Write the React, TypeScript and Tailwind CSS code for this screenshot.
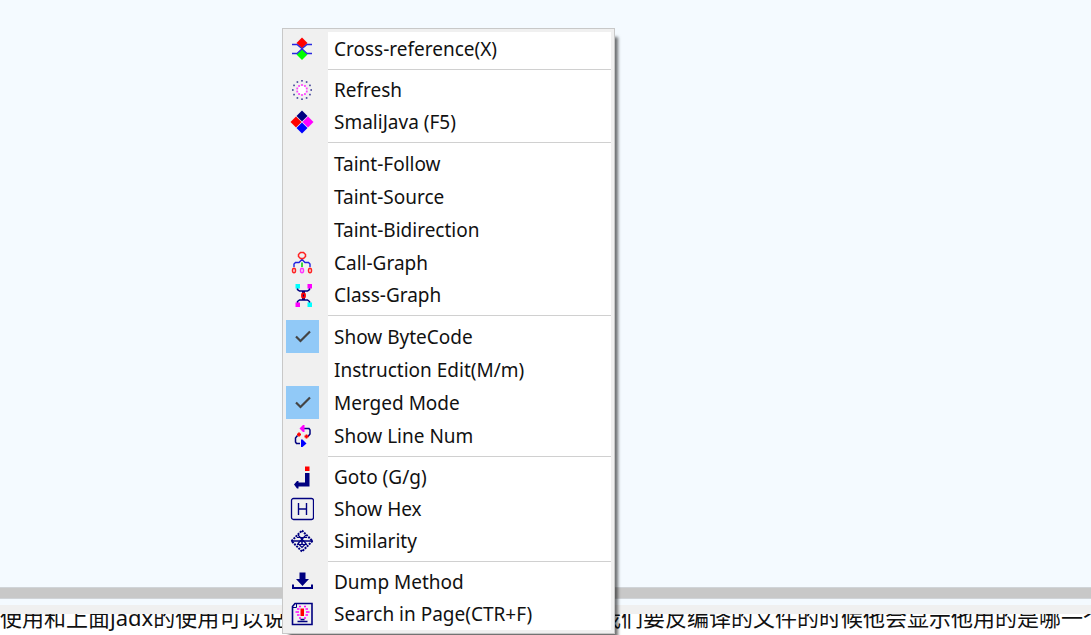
import type { ReactNode } from "react";

type Item = { label: string; icon?: ReactNode; checked?: boolean; tall?: boolean };

const svg = (children: ReactNode) => (
  <svg viewBox="0 0 24 24" className="size-6" fill="none" aria-hidden="true">
    {children}
  </svg>
);

const NAVY = "#000080";

const dots = (n: number, r: number, size: number, color: string, cx = 12, cy = 12) =>
  Array.from({ length: n }, (_, i) => {
    const a = (i * 2 * Math.PI) / n;
    return (
      <rect key={`${color}${i}`} x={cx + r * Math.sin(a) - size / 2} y={cy - r * Math.cos(a) - size / 2} width={size} height={size} fill={color} />
    );
  });

const icons = {
  xref: svg(
    <>
      <path d="M12 .5l5.500 5.500L12 11.500 6.500 6z" fill="#f00" />
      <path d="M12 12l5.500 5.500L12 23 6.500 17.500z" fill="#0f0" />
      <path d="M2 7.500h5l5 4.200 5-4.200h5M2 16.500h5l5-4.700 5 4.700h5" stroke="#2828e0" strokeWidth="1.300" />
    </>,
  ),
  refresh: svg(
    <>
      <circle cx="12" cy="12" r="4" fill="#fff" />
      {dots(12, 9.2, 1.6, "#3c3c96")}
      {dots(10, 5, 1.8, "#f4f")}
    </>,
  ),
  smali: svg(
    <>
      <path d="M12 .5l5.500 5.500L12 11.500 6.500 6z" fill={NAVY} />
      <path d="M6 6.500l5.500 5.500L6 17.500.5 12z" fill="#f00" />
      <path d="M18 6.500l5.500 5.500-5.500 5.500-5.500-5.500z" fill="#f0f" />
      <path d="M12 12.500l5.500 5.500L12 23.500 6.500 18z" fill="#00f" />
    </>,
  ),
  call: svg(
    <>
      <path d="M12 8.500L9 11.500H5.500L4 13v3M12 8.500l3 3h3.500L20 13v3" stroke="#2020e0" strokeWidth="1.400" />
      <path d="M12 11.500v4.500" stroke="#0c0" strokeWidth="1.500" />
      <path d="M10.500 1.500h3l2 2v2l-2 2h-3l-2-2v-2z" stroke="#f22" strokeWidth="1.500" />
      <ellipse cx="4" cy="19.500" rx="1.500" ry="2.300" stroke="#f22" strokeWidth="1.500" />
      <ellipse cx="12" cy="19.500" rx="1.500" ry="2.300" stroke="#f3f" strokeWidth="1.500" />
      <ellipse cx="20" cy="19.500" rx="1.500" ry="2.300" stroke="#f22" strokeWidth="1.500" />
    </>,
  ),
  klass: svg(
    <>
      <path d="M7.500 4.500v2l2 1.500h8l2-1.500v-2M7.500 20v-1.500l2-1.500h8l2 1.500V20" stroke={NAVY} strokeWidth="1.500" />
      <path d="M13.500 8v9" stroke={NAVY} strokeWidth="3" />
      <path d="M5.500 1h4.500v4.500H5.500zM17.500 19.500H22V24h-4.500z" fill="#0ff" />
      <path d="M17.500 1H22v4.500h-4.500zM5.500 19.500H10V24H5.500z" fill="#f0f" />
      <rect x="12" y="10.500" width="3" height="4" rx="1" stroke="#f00" strokeWidth="1.800" />
    </>,
  ),
  line: svg(
    <>
      <path d="M14 4.500h5l1 1.500v4l-2 2.500M10 19.500H6.500L5.500 18v-4l2-2.500" stroke={NAVY} strokeWidth="1.500" />
      <path d="M14.500 1v7H13L9.500 4.500 13 1z" fill="#f0f" />
      <path d="M11 15.500V23h1.500l4-3.500-4-4z" fill="#00f" />
      <path d="M9 8.500v4M7 10.500h4M16.500 10.500v4M14.500 12.500h4" stroke="#f00" strokeWidth="1.800" />
    </>,
  ),
  goto: svg(
    <>
      <path d="M15 1.500h4.500V6H15z" fill="#f00" />
      <path d="M15 8h4.500v13.500H8.500v2H7L4 19.500 7 16h1.500v1.500H15z" fill={NAVY} />
    </>,
  ),
  hex: svg(
    <>
      <rect x="1.500" y="1.500" width="22" height="21" rx="2" stroke={NAVY} strokeWidth="1.300" />
      <path d="M8.500 6v12M16.500 6v12M8.500 12h8" stroke={NAVY} strokeWidth="1.400" />
    </>,
  ),
  similarity: svg(
    <>
      <path d="M12 1.500L22.500 12 12 22.500 1.500 12z" stroke={NAVY} strokeWidth="2" strokeDasharray="2 .97" />
      <path d="M1 12h22M12 8v8" stroke={NAVY} strokeWidth="1.500" />
      <path d="M8 6l8 8.500-4 4-4-4L16 6M7 8.500h10M7 15.500h10" stroke={NAVY} strokeWidth="1.200" />
    </>,
  ),
  dump: svg(
    <>
      <path d="M9.500 2.500h6V9H19l-6.500 7L6 9h3.500z" fill={NAVY} />
      <path d="M3 14.500V18h19v-3.500" stroke={NAVY} strokeWidth="2" />
    </>,
  ),
  search: svg(
    <>
      <path d="M5 1.500h17v21H2.500V4.500z" stroke={NAVY} strokeWidth="1.600" />
      <path d="M3 5.500h3.500V2" stroke={NAVY} strokeWidth="1" />
      <path d="M10.500 6.500h3.500v7.500h-3.500z" fill="#f00" />
      <path d="M9 4.500h2M14 4.500h2M7 7h2.500M15.500 7H18M5.500 10h3.500M16 10h3.500M7 13h2.500M15.500 13H18M9 16h2M14 16h2" stroke="#f0f" strokeWidth="1.600" />
      <path d="M7.500 19.500h10M10.500 17.500h4" stroke={NAVY} strokeWidth="1.400" />
    </>,
  ),
};

const groups: Item[][] = [
  [{ label: "Cross-reference(X)", icon: icons.xref, tall: true }],
  [
    { label: "Refresh", icon: icons.refresh },
    { label: "SmaliJava (F5)", icon: icons.smali },
  ],
  [
    { label: "Taint-Follow", tall: true },
    { label: "Taint-Source", tall: true },
    { label: "Taint-Bidirection", tall: true },
    { label: "Call-Graph", icon: icons.call, tall: true },
    { label: "Class-Graph", icon: icons.klass },
  ],
  [
    { label: "Show ByteCode", checked: true, tall: true },
    { label: "Instruction Edit(M/m)", tall: true },
    { label: "Merged Mode", checked: true, tall: true },
    { label: "Show Line Num", icon: icons.line, tall: true },
  ],
  [
    { label: "Goto (G/g)", icon: icons.goto },
    { label: "Show Hex", icon: icons.hex },
    { label: "Similarity", icon: icons.similarity },
  ],
  [
    { label: "Dump Method", icon: icons.dump },
    { label: "Search in Page(CTR+F)", icon: icons.search },
  ],
];

function MenuItem({ item }: { item: Item }) {
  return (
    <button
      type="button"
      role={item.checked ? "menuitemcheckbox" : "menuitem"}
      aria-checked={item.checked}
      className={`flex w-full items-center text-left ${item.tall ? "h-[33px]" : "h-8"}`}
    >
      <span className="flex h-full w-[42px] shrink-0 items-center">
        <span className={`flex h-full items-center justify-center ${item.checked ? "w-[33px] bg-[#91c9f7]" : "w-8"}`}>
          {item.checked ? svg(<path d="M5 11.500l4.500 4.500L19 6.500" stroke="#444" strokeWidth="2.200" />) : item.icon}
        </span>
      </span>
      <span className="pl-[6px] text-[19px] leading-6 whitespace-nowrap text-[#111]">{item.label}</span>
    </button>
  );
}

function ContextMenu() {
  return (
    <div
      role="menu"
      className="absolute top-7 left-[282px] w-[333px] border border-[#c8c8c8] bg-[#f0f0f0] p-[3px] shadow-[5px_7px_3px_-2px_rgba(0,0,0,0.55)]"
    >
      <div className="bg-linear-to-r from-[#f0f0f0] from-[42px] to-white to-[42px]">
        {groups.map((group, i) => (
          <div key={group[0].label}>
            {i > 0 && (
              <div role="separator" className="flex h-[9px] items-center pl-[42px]">
                <div className="h-px w-full bg-[#d0d0d0]" />
              </div>
            )}
            {group.map((item) => (
              <MenuItem key={item.label} item={item} />
            ))}
          </div>
        ))}
      </div>
    </div>
  );
}

export default function App() {
  return (
    <main className="relative flex h-screen flex-col overflow-hidden bg-[#f4faff] font-['Noto_Sans','Noto_Sans_CJK_SC',sans-serif]">
      <div className="flex-1" />
      <div className="h-3 shrink-0 border-y border-[#d0d4d8] bg-[#c8c8c8]" />
      <div className="h-[6px] shrink-0" />
      <div className="h-[9px] shrink-0 bg-[#f0f0f0]" />
      <div className="flex h-[21px] shrink-0 items-end justify-between overflow-hidden bg-white pb-0.5 text-[22px] leading-8 whitespace-nowrap text-[#111]">
        <p>使用和上面jadx的使用可以说</p>
        <p className="w-[492px]">我们要反编译的文件的时候他会显示他用的是哪一个</p>
      </div>
      <ContextMenu />
    </main>
  );
}
